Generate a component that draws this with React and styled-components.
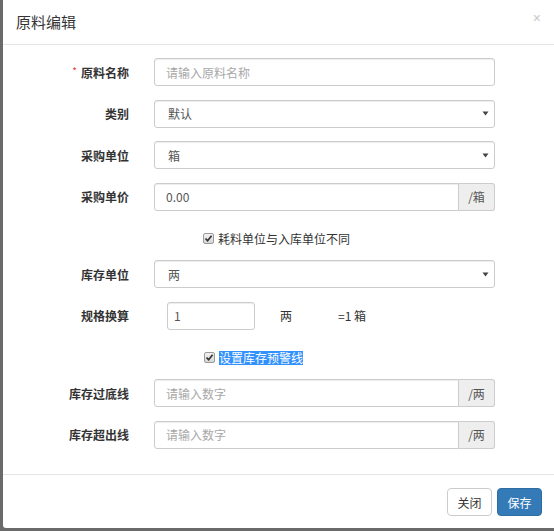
import styled, { createGlobalStyle } from "styled-components";

const GlobalStyle = createGlobalStyle`
  html, body {
    margin: 0;
    padding: 0;
    height: 531px;
    overflow: hidden;
    background: #6a6a6a;
  }
  * {
    box-sizing: border-box;
  }
`;

const FONT = `"Noto Sans CJK SC", "Liberation Sans", sans-serif`;

const Page = styled.div`
  height: 531px;
  padding-left: 3px;
  font-family: ${FONT};
`;

const Modal = styled.div`
  width: 551px;
  height: 528px;
  background: #fff;
  border-bottom-left-radius: 3px;
  display: flex;
  flex-direction: column;
`;

const Header = styled.div`
  height: 45px;
  border-bottom: 1px solid #e5e5e5;
  display: flex;
  align-items: center;
  justify-content: space-between;
  padding: 0 13px 2px 13px;
`;

const Title = styled.h4`
  margin: 0;
  font-size: 15px;
  font-weight: normal;
  color: #333;
`;

const Close = styled.span`
  font-family: "Liberation Sans", sans-serif;
  font-size: 14px;
  color: #c8c8c8;
  line-height: 1;
  margin-top: -6px;
`;

const Body = styled.div`
  display: flex;
  flex-direction: column;
  gap: 13.5px;
  padding: 13px 0 25.5px;
`;

const Row = styled.div`
  display: flex;
  align-items: center;
  height: 28px;
`;

const Label = styled.label`
  width: 126px;
  flex-shrink: 0;
  text-align: right;
  font-size: 12px;
  font-weight: bold;
  color: #333;
`;

const Required = styled.span`
  color: #e4393c;
  font-size: 10px;
  font-weight: normal;
  margin-right: 4px;
  vertical-align: 3px;
`;

const Control = styled.div`
  margin-left: 25px;
  width: 341px;
  display: flex;
  height: 28px;
`;

const Input = styled.input`
  min-width: 0;
  width: ${(p) => p.$width || "auto"};
  flex: ${(p) => (p.$width ? "none" : "1")};
  height: 28px;
  border: 1px solid #ccc;
  border-radius: ${(p) => (p.$addon ? "3px 0 0 3px" : "3px")};
  padding: 0 11px;
  font-family: ${FONT};
  font-size: 12px;
  color: #555;
  box-shadow: inset 0 1px 1px rgba(0, 0, 0, 0.075);
  outline: none;
  &::placeholder {
    color: #a8a8a8;
  }
`;

const Addon = styled.span`
  width: 36px;
  height: 28px;
  display: flex;
  align-items: center;
  justify-content: center;
  background: #eee;
  border: 1px solid #ccc;
  border-left: none;
  border-radius: 0 3px 3px 0;
  font-size: 12px;
  color: #555;
`;

const SelectBox = styled.div`
  flex: 1;
  height: 28px;
  border: 1px solid #ccc;
  border-radius: 3px;
  display: flex;
  align-items: center;
  justify-content: space-between;
  padding: 0 5px 0 13px;
  font-size: 12px;
  color: #555;
  box-shadow: inset 0 1px 1px rgba(0, 0, 0, 0.075);
`;

const ConvertInput = styled(Input)`
  margin-left: 38px;
  padding: 0 6px;
`;

const UnitText = styled.span`
  font-size: 12px;
  color: #333;
  margin-left: ${(p) => p.$gap}px;
`;

const CheckRow = styled.div`
  display: flex;
  align-items: center;
  height: 16px;
  margin-top: 6.5px;
  padding-left: ${(p) => p.$left}px;
  font-size: 12px;
  color: #333;
  gap: 4px;
`;

const Box = styled.span`
  width: 11px;
  height: 11px;
  border: 1px solid #9a9a9a;
  border-radius: 2px;
  background: linear-gradient(#f2f2f2, #d6d6d6);
  display: flex;
  align-items: center;
  justify-content: center;
`;

const Selected = styled.span`
  background: #3391fb;
  color: #fff;
  line-height: 14px;
`;

const Footer = styled.div`
  border-top: 1px solid #e5e5e5;
  display: flex;
  justify-content: flex-end;
  gap: 5px;
  padding: 13px 12px 12px;
`;

const Button = styled.button`
  width: 45px;
  height: 28px;
  border-radius: 4px;
  font-family: ${FONT};
  font-size: 12px;
  padding: 0;
  border: 1px solid ${(p) => (p.$primary ? "#2e6da4" : "#ccc")};
  background: ${(p) => (p.$primary ? "#337ab7" : "#fff")};
  color: ${(p) => (p.$primary ? "#fff" : "#333")};
`;

const Arrow = () => (
  <svg width="7" height="5" viewBox="0 0 7 5">
    <path d="M0.5 0.5 L6.5 0.5 L3.5 4.5 Z" fill="#444" />
  </svg>
);

const Check = ({ selected, children, left }) => (
  <CheckRow $left={left}>
    <Box>
      <svg width="9" height="9" viewBox="0 0 9 9">
        <path d="M1.5 4.5 L3.6 6.8 L7.6 1.8" fill="none" stroke="#333" strokeWidth="1.7" />
      </svg>
    </Box>
    {selected ? <Selected>{children}</Selected> : children}
  </CheckRow>
);

const App = () => {
  return (
    <Page>
      <GlobalStyle />
      <Modal>
        <Header>
          <Title>原料编辑</Title>
          <Close>×</Close>
        </Header>
        <Body>
          <Row>
            <Label>
              <Required>*</Required>原料名称
            </Label>
            <Control>
              <Input placeholder="请输入原料名称" />
            </Control>
          </Row>
          <Row>
            <Label>类别</Label>
            <Control>
              <SelectBox>
                默认 <Arrow />
              </SelectBox>
            </Control>
          </Row>
          <Row>
            <Label>采购单位</Label>
            <Control>
              <SelectBox>
                箱 <Arrow />
              </SelectBox>
            </Control>
          </Row>
          <Row>
            <Label>采购单价</Label>
            <Control>
              <Input $addon defaultValue="0.00" />
              <Addon>/箱</Addon>
            </Control>
          </Row>
          <Check left={200}>耗料单位与入库单位不同</Check>
          <Row>
            <Label>库存单位</Label>
            <Control>
              <SelectBox>
                两 <Arrow />
              </SelectBox>
            </Control>
          </Row>
          <Row>
            <Label>规格换算</Label>
            <ConvertInput $width="88px" defaultValue="1" />
            <UnitText $gap={25}>两</UnitText>
            <UnitText $gap={46}>=1 箱</UnitText>
          </Row>
          <Check left={201} selected>
            设置库存预警线
          </Check>
          <Row>
            <Label>库存过底线</Label>
            <Control>
              <Input $addon placeholder="请输入数字" />
              <Addon>/两</Addon>
            </Control>
          </Row>
          <Row>
            <Label>库存超出线</Label>
            <Control>
              <Input $addon placeholder="请输入数字" />
              <Addon>/两</Addon>
            </Control>
          </Row>
        </Body>
        <Footer>
          <Button>关闭</Button>
          <Button $primary>保存</Button>
        </Footer>
      </Modal>
    </Page>
  );
};

export default App;
